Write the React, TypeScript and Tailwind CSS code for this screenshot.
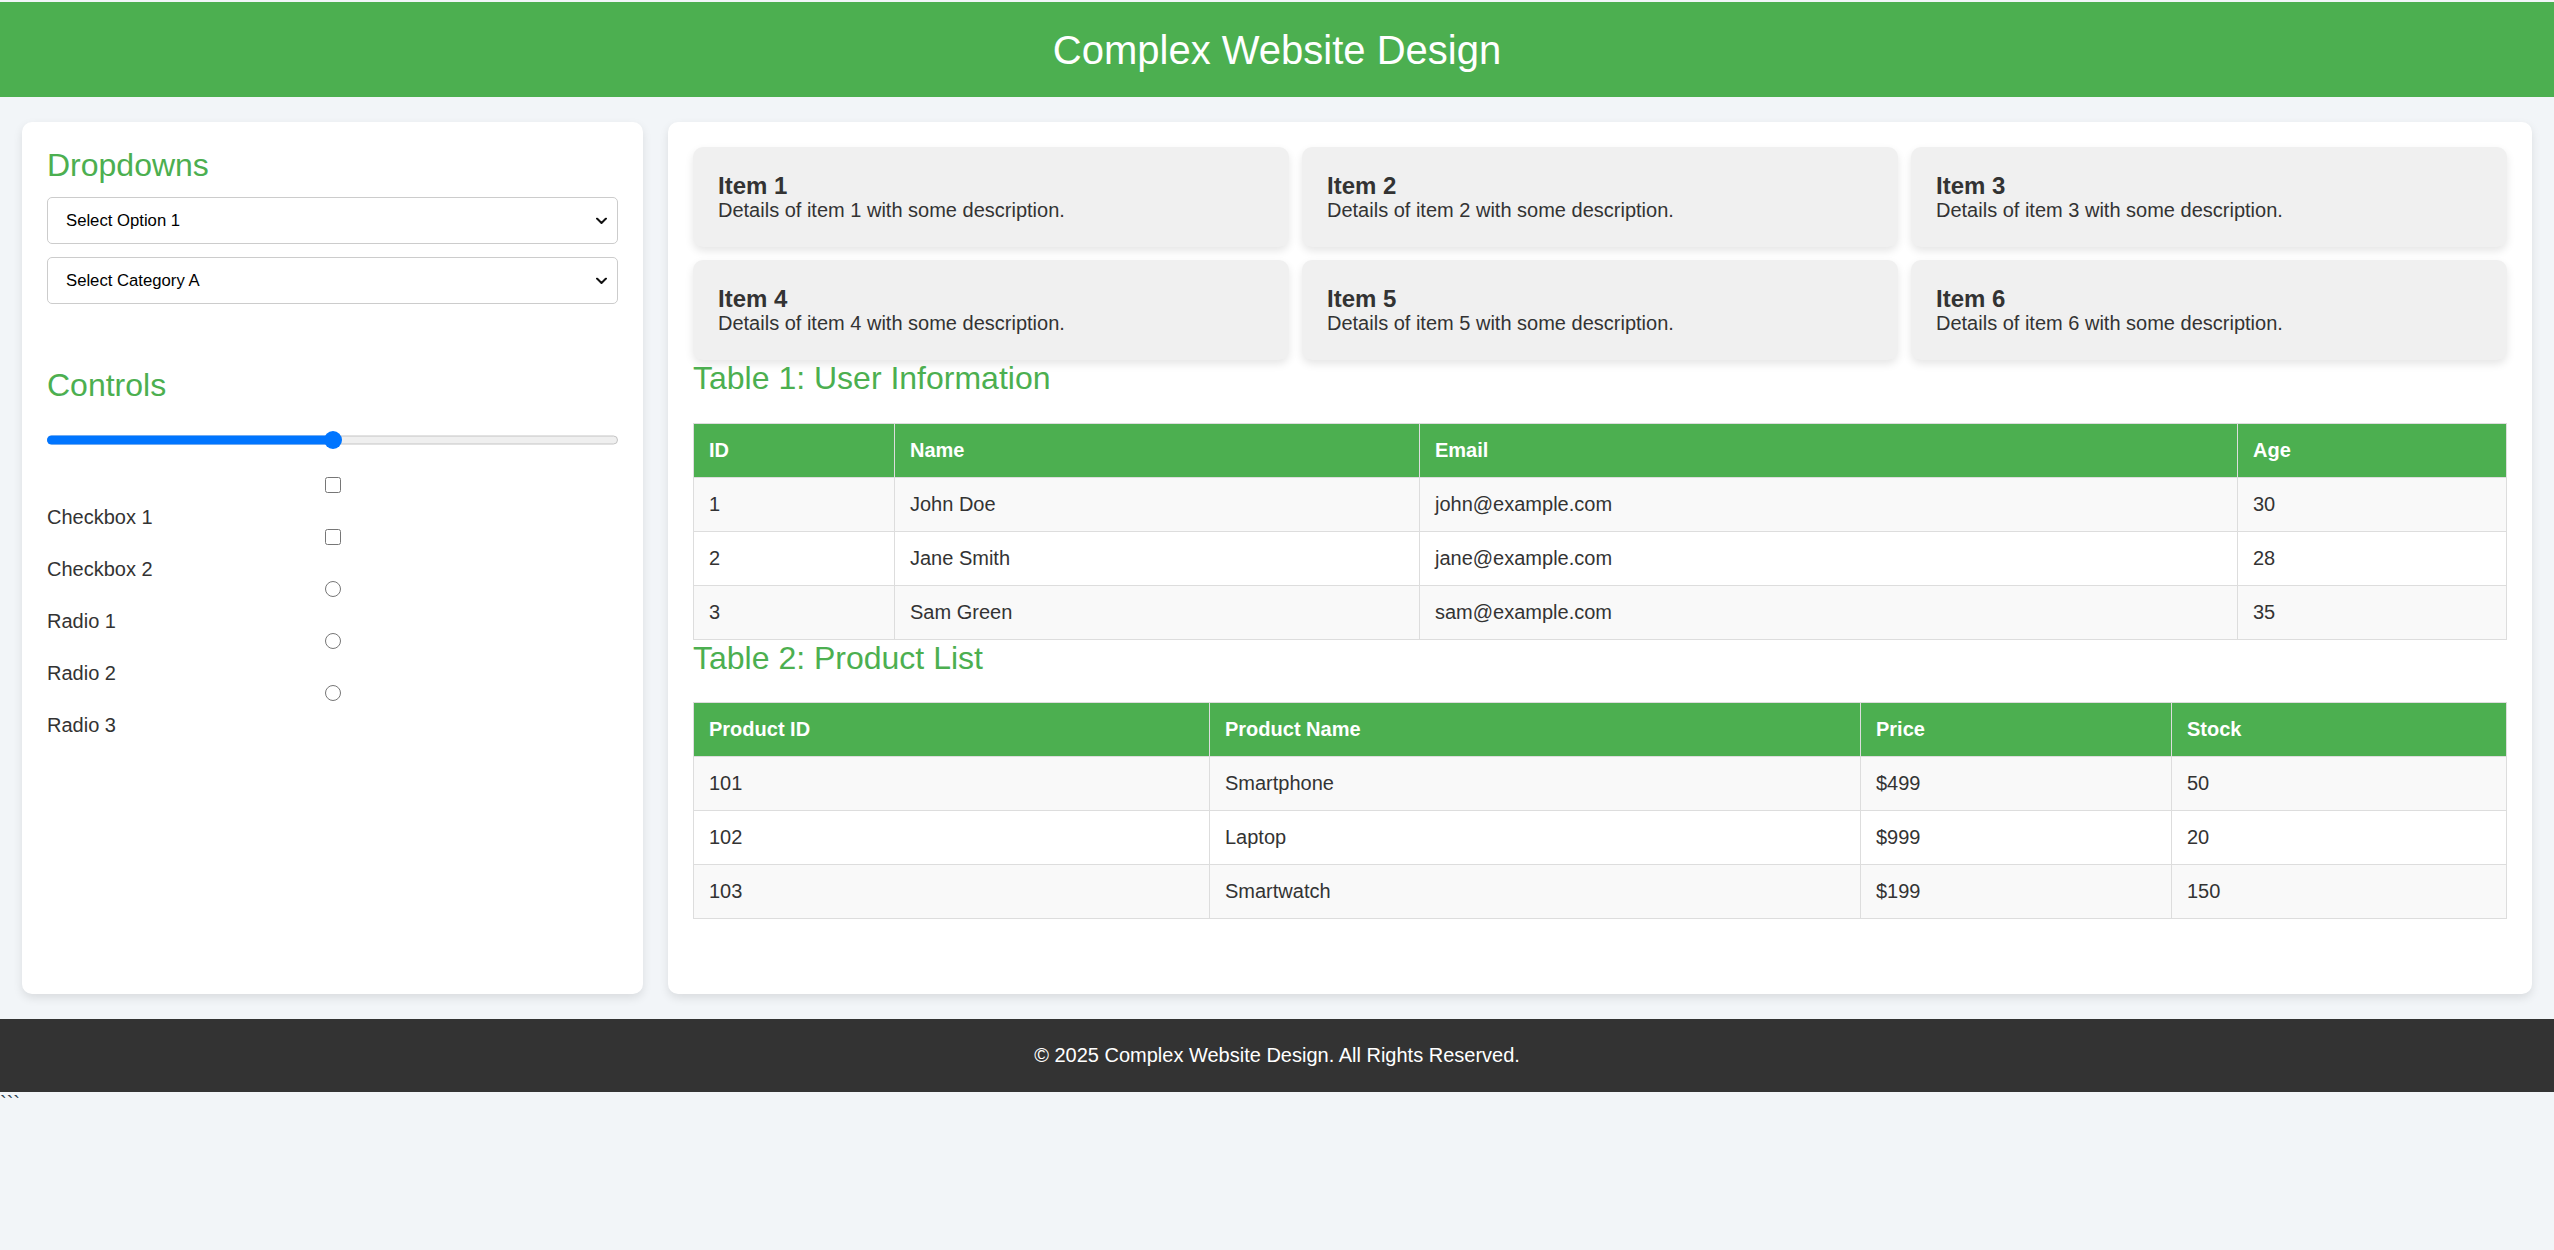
import React from "react";

const users = [
  ["1", "John Doe", "john@example.com", "30"],
  ["2", "Jane Smith", "jane@example.com", "28"],
  ["3", "Sam Green", "sam@example.com", "35"],
];

const products = [
  ["101", "Smartphone", "$499", "50"],
  ["102", "Laptop", "$999", "20"],
  ["103", "Smartwatch", "$199", "150"],
];

function Chevron() {
  return (
    <svg
      className="pointer-events-none absolute right-[11px] top-1/2 -translate-y-1/2"
      width="11"
      height="7"
      viewBox="0 0 11 7"
      fill="none"
    >
      <path d="M1 1l4.5 4.5L10 1" stroke="#111" strokeWidth="2" strokeLinecap="round" strokeLinejoin="round" />
    </svg>
  );
}

function Select({ options }: { options: string[] }) {
  return (
    <div className="relative">
      <select className="block w-full h-[47px] appearance-none rounded-[5px] border border-[#cccccc] bg-white pl-[18px] pr-[30px] text-[16.7px] text-black outline-none">
        {options.map((o) => (
          <option key={o}>{o}</option>
        ))}
      </select>
      <Chevron />
    </div>
  );
}

function DataTable({
  head,
  rows,
  widths,
  className,
}: {
  head: string[];
  rows: string[][];
  widths: string[];
  className?: string;
}) {
  return (
    <table className={"w-full table-fixed border-collapse " + (className ?? "")}>
      <colgroup>
        {widths.map((w, i) => (
          <col key={i} className={w} />
        ))}
      </colgroup>
      <thead>
        <tr>
          {head.map((h) => (
            <th
              key={h}
              className="border border-[#dddddd] bg-[#4caf50] px-[15px] py-[15px] text-left text-[20px] font-bold leading-[23px] text-white"
            >
              {h}
            </th>
          ))}
        </tr>
      </thead>
      <tbody>
        {rows.map((r, i) => (
          <tr key={i} className={i % 2 === 0 ? "bg-[#f9f9f9]" : "bg-white"}>
            {r.map((c, j) => (
              <td key={j} className="border border-[#dddddd] px-[15px] py-[15px] text-[20px] leading-[23px] text-[#333]">
                {c}
              </td>
            ))}
          </tr>
        ))}
      </tbody>
    </table>
  );
}

function Check({ round, label }: { round?: boolean; label: string }) {
  return (
    <div>
      <div className="flex h-[16px] justify-center mb-[13px]">
        <input
          type={round ? "radio" : "checkbox"}
          name={round ? "r" : undefined}
          className="m-0 h-[16px] w-[16px]"
        />
      </div>
      <div className="text-[20px] leading-[23px] text-[#333]">{label}</div>
    </div>
  );
}

export default function App() {
  return (
    <div className="min-h-screen bg-[#f2f5f8] pt-[2px] font-['Liberation_Sans',Arial,sans-serif] text-[20px] text-[#333]">
      <header className="flex h-[95px] items-center justify-center bg-[#4caf50]">
        <h1 className="text-[40px] font-normal leading-[46px] text-white">Complex Website Design</h1>
      </header>

      <div className="flex gap-[25px] px-[22px] py-[25px]">
        <aside className="w-[621px] shrink-0 rounded-[10px] bg-white px-[25px] pt-[25px] pb-[25px] shadow-[0_4px_10px_rgba(0,0,0,0.1)]">
          <h2 className="mb-[13px] text-[32px] font-normal leading-[37px] text-[#4caf50]">Dropdowns</h2>
          <div className="flex flex-col gap-[13px]">
            <Select options={["Select Option 1", "Select Option 2", "Select Option 3"]} />
            <Select options={["Select Category A", "Select Category B", "Select Category C"]} />
          </div>

          <h2 className="mt-[63px] text-[32px] font-normal leading-[37px] text-[#4caf50]">Controls</h2>
          <div className="relative mt-[27px] h-[18px]">
            <div className="absolute left-0 right-0 top-1/2 h-[9px] -translate-y-1/2 rounded-full border border-[#c4c4c4] bg-[#efefef]" />
            <div className="absolute left-0 top-1/2 h-[9px] w-1/2 -translate-y-1/2 rounded-full bg-[#0075ff]" />
            <div className="absolute left-1/2 top-0 h-[18px] w-[18px] -translate-x-1/2 rounded-full bg-[#0075ff]" />
          </div>

          <div className="mt-[28px] flex flex-col">
            <Check label="Checkbox 1" />
            <Check label="Checkbox 2" />
            <Check round label="Radio 1" />
            <Check round label="Radio 2" />
            <Check round label="Radio 3" />
          </div>
        </aside>

        <main className="min-w-0 flex-1 rounded-[10px] bg-white p-[25px] shadow-[0_4px_10px_rgba(0,0,0,0.1)]">
          <div className="grid grid-cols-3 gap-[13px]">
            {[1, 2, 3, 4, 5, 6].map((n) => (
              <div
                key={n}
                className="rounded-[10px] bg-[#f0f0f0] p-[25px] shadow-[0_4px_8px_rgba(0,0,0,0.1)]"
              >
                <div className="text-[24px] font-bold leading-[27px] text-[#333]">Item {n}</div>
                <div className="text-[20px] leading-[23px] text-[#333]">
                  Details of item {n} with some description.
                </div>
              </div>
            ))}
          </div>

          <h2 className="mb-[26px] text-[32px] font-normal leading-[37px] text-[#4caf50]">Table 1: User Information</h2>
          <DataTable
            head={["ID", "Name", "Email", "Age"]}
            rows={users}
            widths={["w-[201px]", "w-[525px]", "w-[818px]", ""]}
          />

          <h2 className="mb-[25px] text-[32px] font-normal leading-[37px] text-[#4caf50]">Table 2: Product List</h2>
          <DataTable
            head={["Product ID", "Product Name", "Price", "Stock"]}
            rows={products}
            widths={["w-[516px]", "w-[651px]", "w-[311px]", ""]}
            className="mb-[50px]"
          />
        </main>
      </div>

      <footer className="bg-[#333333] py-[25px] text-center text-[20px] leading-[23px] text-white">
        © 2025 Complex Website Design. All Rights Reserved.
      </footer>
      <div className="text-[20px] leading-[23px] text-[#2c3e50]">```</div>
    </div>
  );
}
